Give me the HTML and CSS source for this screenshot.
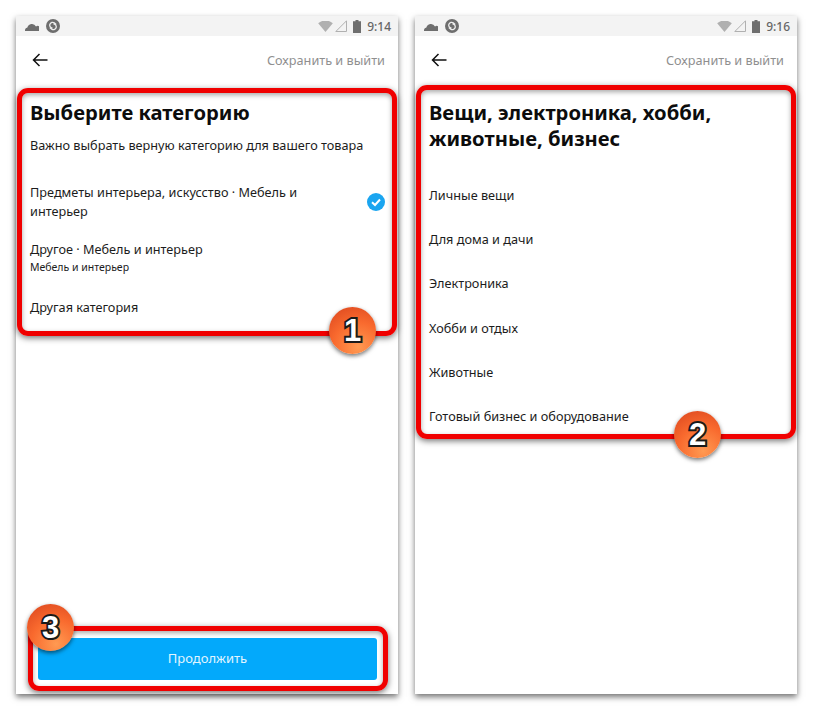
FILE: index.html
```html
<!DOCTYPE html>
<html lang="ru">
<head>
    <meta charset="UTF-8">
    <title>Выберите категорию</title>
    <link rel="stylesheet" href="styles.css">
</head>
<body>
    <div class="phone">
        <div class="status">
            <svg class="cloud" viewBox="0 0 14 9"><path d="M0 9a3 3 0 0 1 2.4-3.4A4.6 4.6 0 0 1 11 4.4 2.6 2.6 0 0 1 14 9z"/></svg>
            <svg class="app" viewBox="0 0 14 14"><circle cx="7" cy="7" r="7" fill="#6e6e6e"/><path d="M10.200 5.400 8.200 3.800C6.800 2.900 4.900 3.500 4.100 4.900 3.300 6.200 3.800 7.800 5 8.500L6.500 9.400M3.800 8.600 5.800 10.200C7.200 11.100 9.100 10.500 9.900 9.100 10.700 7.800 10.200 6.200 9 5.500L7.500 4.600" fill="none" stroke="#eee" stroke-width="1.300"/></svg>
            <span class="status-right">
                <svg class="wifi" viewBox="0 0 16 12"><path d="M0 2.500a12 12 0 0 1 16 0L8 12z"/></svg>
                <svg class="signal" viewBox="0 0 12 12"><path d="M.8 11.500 11.500.8v10.700z"/></svg>
                <svg class="battery" viewBox="0 0 8 13"><path d="M2.500 0h3v1.200H8V13H0V1.200h2.500z"/></svg>
                <span class="time">9:14</span>
            </span>
        </div>
        <div class="topbar">
            <svg class="back" viewBox="0 0 16 14"><path d="M15.500 7H1.500M7.500 1 1.500 7l6 6"/></svg>
            <span class="save">Сохранить и выйти</span>
        </div>
        <div class="mark mark-first">
            <h1>Выберите категорию</h1>
            <p class="lead">Важно выбрать верную категорию для вашего товара</p>
            <div class="row row-checked">
                <span>Предметы интерьера, искусство · Мебель и интерьер</span>
                <svg class="check" viewBox="0 0 18 18"><circle cx="9" cy="9" r="9" fill="#1aa5f0"/><path d="M5 9.300 8 12l5-5.500" fill="none" stroke="#fff" stroke-width="2"/></svg>
            </div>
            <div class="row row-sub">
                <span>Другое · Мебель и интерьер</span>
                <small>Мебель и интерьер</small>
            </div>
            <div class="row row-last">Другая категория</div>
            <span class="badge badge-1">1</span>
        </div>
        <div class="mark mark-button">
            <button class="continue">Продолжить</button>
            <span class="badge badge-3">3</span>
        </div>
    </div>

    <div class="phone">
        <div class="status">
            <svg class="cloud" viewBox="0 0 14 9"><path d="M0 9a3 3 0 0 1 2.4-3.4A4.6 4.6 0 0 1 11 4.4 2.6 2.6 0 0 1 14 9z"/></svg>
            <svg class="app" viewBox="0 0 14 14"><circle cx="7" cy="7" r="7" fill="#6e6e6e"/><path d="M10.200 5.400 8.200 3.800C6.800 2.900 4.900 3.500 4.100 4.900 3.300 6.200 3.800 7.800 5 8.500L6.500 9.400M3.800 8.600 5.800 10.200C7.200 11.100 9.100 10.500 9.900 9.100 10.700 7.800 10.200 6.200 9 5.500L7.500 4.600" fill="none" stroke="#eee" stroke-width="1.300"/></svg>
            <span class="status-right">
                <svg class="wifi" viewBox="0 0 16 12"><path d="M0 2.500a12 12 0 0 1 16 0L8 12z"/></svg>
                <svg class="signal" viewBox="0 0 12 12"><path d="M.8 11.500 11.500.8v10.700z"/></svg>
                <svg class="battery" viewBox="0 0 8 13"><path d="M2.500 0h3v1.200H8V13H0V1.200h2.500z"/></svg>
                <span class="time">9:16</span>
            </span>
        </div>
        <div class="topbar">
            <svg class="back" viewBox="0 0 16 14"><path d="M15.500 7H1.500M7.500 1 1.500 7l6 6"/></svg>
            <span class="save">Сохранить и выйти</span>
        </div>
        <div class="mark mark-second">
            <h1>Вещи, электроника, хобби, животные, бизнес</h1>
            <div class="simple-list">
                <div>Личные вещи</div>
                <div>Для дома и дачи</div>
                <div>Электроника</div>
                <div>Хобби и отдых</div>
                <div>Животные</div>
                <div>Готовый бизнес и оборудование</div>
            </div>
            <span class="badge badge-2">2</span>
        </div>
    </div>
</body>
</html>
```

FILE: styles.css
```css
* {
    box-sizing: border-box;
}
body {
    margin: 0;
    padding: 16px;
    display: flex;
    gap: 17px;
    background-color: white;
    font-family: "Noto Sans", sans-serif;
    color: #1c1c1c;
}
.phone {
    width: 382px;
    height: 678px;
    display: flex;
    flex-direction: column;
    background-color: white;
    box-shadow: 0 3px 6px rgba(0, 0, 0, 0.55);
}
.status {
    height: 20px;
    flex-shrink: 0;
    display: flex;
    align-items: center;
    padding: 0 7px 0 9px;
    background-color: #f3f3f3;
}
.status svg {
    display: block;
    fill: #6e6e6e;
}
.cloud {
    width: 14px;
    height: 9px;
    margin-right: 7px;
}
.app {
    width: 14px;
    height: 14px;
}
.status-right {
    margin-left: auto;
    display: flex;
    align-items: center;
}
.status .wifi {
    width: 15px;
    height: 11px;
    fill: #b0b0b0;
}
.status .signal {
    width: 12px;
    height: 12px;
    margin-left: 2px;
    fill: none;
    stroke: #b0b0b0;
    stroke-width: 1;
}
.status .battery {
    width: 8px;
    height: 13px;
    margin-left: 6px;
}
.time {
    margin-left: 6px;
    font-size: 12px;
    font-weight: 500;
    color: #666;
}
.topbar {
    height: 50px;
    flex-shrink: 0;
    display: flex;
    align-items: center;
    justify-content: space-between;
    padding: 0 13px 2px 16px;
}
.back {
    width: 16px;
    height: 14px;
    fill: none;
    stroke: #111;
    stroke-width: 1.500;
}
.save {
    font-size: 12.700px;
    color: #8f8f8f;
}
.mark {
    position: relative;
    border: 5px solid #f00000;
    border-radius: 11px;
    box-shadow: 0 2px 6px rgba(0, 0, 0, 0.55), inset 0 2px 5px rgba(0, 0, 0, 0.35);
}
.mark-first {
    height: 248px;
    margin: 2px 1px 0;
    padding: 6px 8px 0;
}
.mark-second {
    height: 354px;
    margin: -1px 1px 0;
    padding: 9px 8px 0;
}
.mark-button {
    height: 65px;
    margin: auto 10px 3px 12px;
    padding: 7px 6px 5px 5px;
}
h1 {
    margin: 0;
    font-size: 20.200px;
    line-height: 26px;
    font-weight: 700;
    color: #0c0c0c;
}
.lead {
    margin: 10px 0 0;
    font-size: 12.700px;
    line-height: 20px;
}
.row {
    font-size: 12.700px;
    line-height: 19px;
}
.row-checked {
    display: flex;
    align-items: center;
    justify-content: space-between;
    margin-top: 28px;
}
.row-checked span {
    width: 300px;
}
.check {
    width: 18px;
    height: 18px;
    margin-right: -1px;
}
.row-sub {
    margin-top: 19px;
}
.row-sub span {
    display: block;
}
.row-sub small {
    display: block;
    font-size: 10.500px;
    line-height: 16px;
}
.row-last {
    margin-top: 23px;
}
.simple-list {
    margin-top: 34px;
}
.simple-list div {
    height: 44.200px;
    font-size: 12.700px;
    line-height: 20px;
}
.continue {
    display: block;
    width: 100%;
    height: 42px;
    padding: 0 0 2px;
    border: 0;
    border-radius: 3px;
    background-color: #03a9fb;
    color: #e2f5ff;
    font-family: inherit;
    font-size: 13px;
}
.badge {
    position: absolute;
    width: 47px;
    height: 47px;
    display: flex;
    align-items: center;
    justify-content: center;
    border-radius: 50%;
    background: radial-gradient(circle at 62% 85%, #ff9a52 0%, #f96a2e 50%, #d9431d 100%);
    box-shadow: 0 2px 4px rgba(0, 0, 0, 0.55);
    font-family: "Liberation Sans", sans-serif;
    font-size: 31px;
    font-weight: 700;
    color: white;
    -webkit-text-stroke: 4px #1a1a1a;
    paint-order: stroke fill;
}
.badge-1 {
    right: 16px;
    bottom: -23px;
}
.badge-2 {
    left: 253px;
    bottom: -24px;
}
.badge-3 {
    left: -6px;
    top: -27px;
}
```
